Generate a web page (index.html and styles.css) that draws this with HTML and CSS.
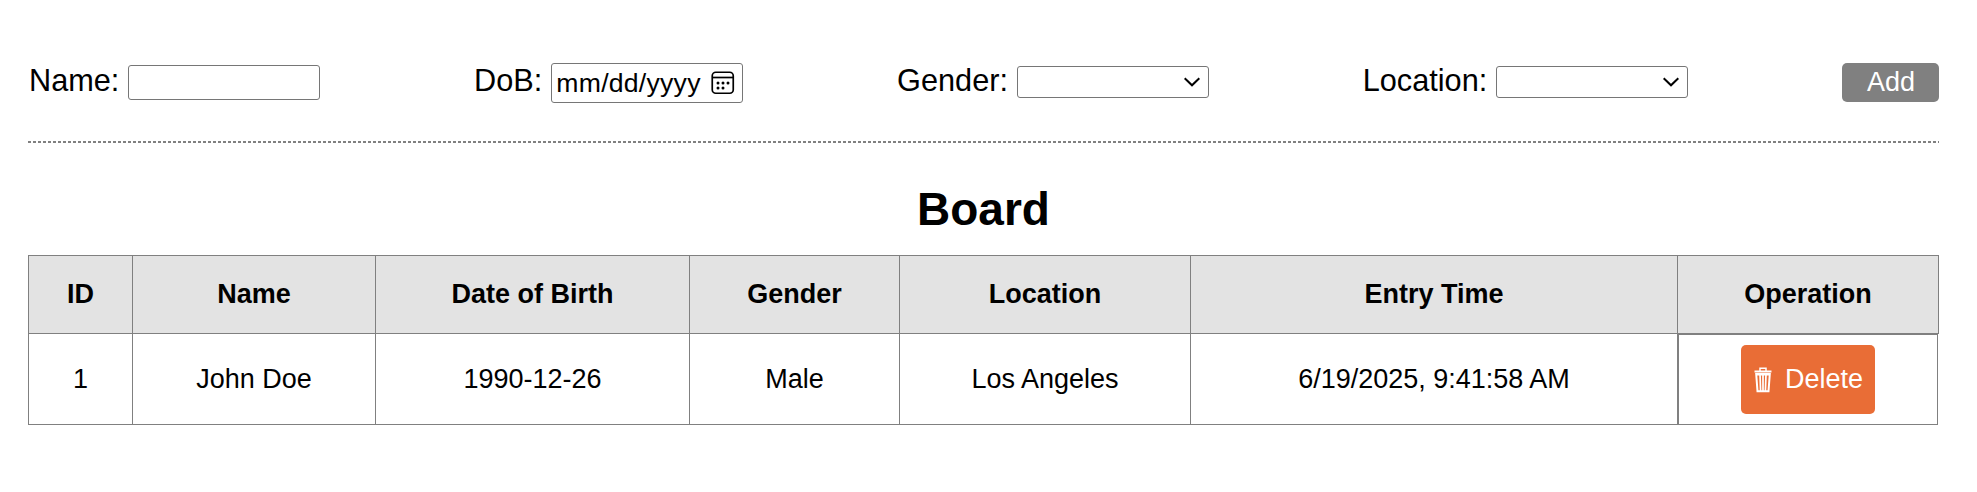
FILE: index.html
```html
<!DOCTYPE html>
<html lang="en">
<head>
<meta charset="utf-8">
<title>Board</title>
<link rel="stylesheet" href="styles.css">
</head>
<body>
<main class="page">
  <form class="entry-form">
    <label class="field">Name: <input class="control control-text" type="text"></label>
    <label class="field">DoB:
      <span class="control control-date"><span>mm/dd/yyyy</span>
        <svg class="calendar" viewBox="0 0 24 24" fill="none" stroke="#000" stroke-width="1.7"><rect x="1.25" y="1.25" width="21" height="21" rx="3.5"/><path d="M1 6.5h22"/><g fill="#000" stroke="none"><circle cx="7" cy="12" r="1.5"/><circle cx="12" cy="12" r="1.5"/><circle cx="17" cy="12" r="1.5"/><circle cx="7" cy="17" r="1.5"/><circle cx="12" cy="17" r="1.5"/></g></svg>
      </span>
    </label>
    <label class="field">Gender:
      <span class="control control-select"><svg class="chevron" viewBox="0 0 16 10" fill="none" stroke="#000" stroke-width="2"><path d="M.7 1.2 8 8.3l7.3-7.1"/></svg></span>
    </label>
    <label class="field">Location:
      <span class="control control-select"><svg class="chevron" viewBox="0 0 16 10" fill="none" stroke="#000" stroke-width="2"><path d="M.7 1.2 8 8.3l7.3-7.1"/></svg></span>
    </label>
    <button class="add" type="button">Add</button>
  </form>
  <h1 class="title">Board</h1>
  <table class="board">
    <colgroup><col class="c-id"><col class="c-name"><col class="c-dob"><col class="c-gender"><col class="c-location"><col class="c-time"><col class="c-op"></colgroup>
    <thead>
      <tr><th>ID</th><th>Name</th><th>Date of Birth</th><th>Gender</th><th>Location</th><th>Entry Time</th><th>Operation</th></tr>
    </thead>
    <tbody>
      <tr><td>1</td><td>John Doe</td><td>1990-12-26</td><td>Male</td><td>Los Angeles</td><td>6/19/2025, 9:41:58 AM</td>
        <td class="operation"><button class="delete" type="button"><svg class="trash" viewBox="0 0 18 26" fill="none" stroke="#fff"><path stroke-width="1.5" d="M6 4V1.2h6V4"/><path stroke-width="2" d="M.5 4.5h17"/><path stroke-width="2" d="M2.2 7l1.3 17.3h11L15.8 7zM1.5 7.4h15"/><path stroke-width="1.7" d="M6 7l.6 17M9 7v17M12 7l-.6 17"/></svg><span>Delete</span></button></td></tr>
    </tbody>
  </table>
</main>
</body>
</html>
```
FILE: styles.css
```css
* { box-sizing: border-box; }
body { margin: 0; background: #fff; color: #000; font-family: "Liberation Sans", Arial, sans-serif; }
.page { padding: 63px 38px 0 28px; }
.entry-form { display: flex; justify-content: space-between; align-items: flex-start; height: 80px; padding-left: 1px;
  background: repeating-linear-gradient(90deg, #808080 0 3px, transparent 3px 5px) left bottom / 100% 2px no-repeat; }
.field { display: flex; align-items: center; gap: 9px; height: 39px; font-size: 30.7px; line-height: 34px; padding-bottom: 3px; white-space: nowrap; }
.control { display: flex; align-items: center; width: 192px; border: 1px solid #767676; border-radius: 3px; background: #fff; flex: none; }
.control-text { height: 35px; padding: 0 4px; font: 25px "Liberation Sans", Arial, sans-serif; margin-top: 3px; }
.control-date { height: 40px; margin-top: 3px; padding: 0 7px 0 4px; justify-content: space-between; font-size: 26.6px; letter-spacing: 0.25px; }
.calendar { width: 24px; height: 24px; display: block; }
.control-select { height: 32px; margin-top: 2px; padding-right: 8px; justify-content: flex-end; }
.chevron { width: 16px; height: 10px; }
.add { width: 97px; height: 39px; padding: 0 0 1px 1px; border: 0; border-radius: 5px; background: #808080; color: #fff; font: 27px "Liberation Sans", Arial, sans-serif; }
.title { margin: 40px 0 20px; text-align: center; font-size: 46px; line-height: 52px; }
.board { width: 1911px; border-collapse: collapse; table-layout: fixed; font-size: 27px; line-height: 31px; text-align: center; }
.board th, .board td { padding: 0; border: 1px solid #808080; }
.board th { height: 78px; background: #e3e3e3; }
.board td { height: 90px; padding-top: 1px; }
.c-id { width: 104px; }
.c-name { width: 243px; }
.c-dob { width: 314px; }
.c-gender { width: 210px; }
.c-location { width: 291px; }
.c-time { width: 487px; }
.c-op { width: 261px; }
.board .operation { width: 260px; height: 91px; margin-bottom: -1px; padding: 0; display: flex; align-items: center; justify-content: center; }
.delete { display: flex; align-items: center; gap: 13px; width: 134px; height: 69px; padding: 0 0 0 13px; border: 0; border-radius: 5px; background: #e96d36; color: #fff; font: 27px "Liberation Sans", Arial, sans-serif; }
.trash { width: 18px; height: 26px; flex: none; }
```
